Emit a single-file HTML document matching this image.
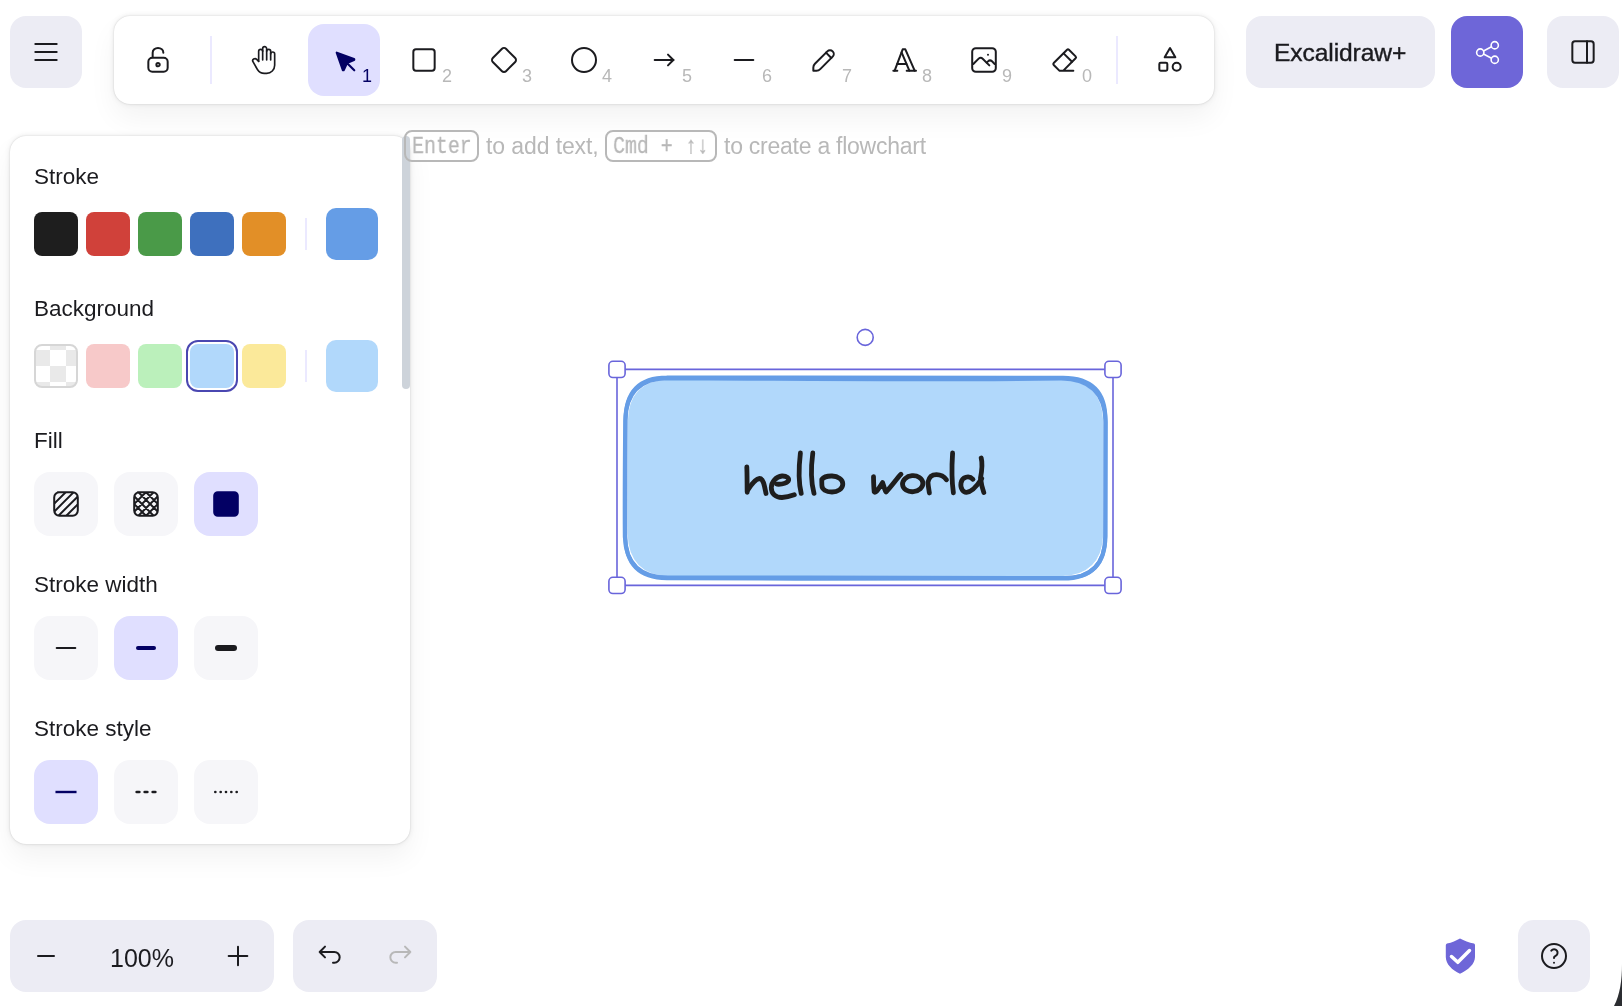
<!DOCTYPE html>
<html><head><meta charset="utf-8">
<style>
html,body{-webkit-font-smoothing:antialiased;margin:0;padding:0;width:1622px;height:1006px;overflow:hidden;background:#fff;font-family:"Liberation Sans",sans-serif;color:#1b1b1f}
.abs{position:absolute}
.kb,.h,.hint,.mono,.txt{will-change:transform}
.btn{position:absolute;background:#ececf4;border-radius:16px}
svg{position:absolute;overflow:visible}
.ic{fill:none;stroke:#1b1b1f;stroke-linecap:round;stroke-linejoin:round}
.island{position:absolute;background:#fff;border-radius:16px;box-shadow:0 0 1.86px 0 rgba(0,0,0,.17),0 0 6.25px 0 rgba(0,0,0,.08),0 14px 28px 0 rgba(0,0,0,.05)}
.kb{position:absolute;font-size:18px;color:#b8b8b8;line-height:1}
.sel{position:absolute;background:#e0dfff;border-radius:16px}
.h{position:absolute;font-size:22.5px;line-height:1;color:#1b1b1f;white-space:nowrap}
.sw{position:absolute;width:44px;height:44px;border-radius:8px}
.ob{position:absolute;width:64px;height:64px;border-radius:16px;background:#f6f6f9}
.ob.on{background:#e0dfff}
.hint{position:absolute;font-size:23px;color:#b8b8b8;white-space:nowrap;line-height:1}
.kbd{position:absolute;border:2px solid #b8b8b8;border-radius:8px;box-sizing:border-box;height:32px;top:130px}
.mono{position:absolute;-webkit-text-stroke:0.3px #b8b8b8;transform-origin:0 0;transform:scaleX(0.83);font-family:"Liberation Mono",monospace;font-size:24px;color:#b8b8b8;line-height:1;white-space:pre}
</style></head><body>


<!-- canvas -->
<svg style="left:0;top:0" width="1622" height="1006" viewBox="0 0 1622 1006">
<path d="M668 379.8 C 800 379, 950 379.8, 1062 380 Q 1102 380.5, 1103.3 422 C 1103.5 470, 1103 500, 1103.2 535 Q 1101.5 575, 1061 576.2 C 950 576.5, 800 576.4, 670 576.4 Q 629 575.5, 627.6 534 C 627.5 490, 627.3 460, 627.8 422 Q 628.3 381, 668 379.8Z" fill="#b1d8fb"/>
<g fill="none" stroke="#659de6" stroke-width="4" stroke-linecap="round" stroke-linejoin="round">
<path d="M667 377.6 C 800 377.3, 950 377.6, 1063 377.8 Q 1105.6 378, 1105.5 420 C 1105.6 470, 1105.4 500, 1105.5 536 Q 1105.2 578.5, 1063 578.6 C 950 579, 800 578.8, 667 578.2 Q 625.6 578, 625.3 536 C 625.2 490, 625.4 460, 625.6 420 Q 625.5 377.6, 667 377.6"/>
<path d="M668 378.2 C 800 378.6, 900 380.4, 1061 378.5 Q 1104.5 378.8, 1105.7 422 C 1105.2 470, 1105.6 500, 1105.2 537 Q 1104.8 577.8, 1065 578 C 950 577.4, 800 577.5, 668 577.6 Q 626.3 577.2, 624.8 537 C 624.5 500, 624.8 460, 625.2 421 Q 626 378.4, 668 378.2"/>
</g>
<g fill="none" stroke="#1e1e1e" stroke-width="4.8" stroke-linecap="round" stroke-linejoin="round">
<path d="M746.8 466.8 C 747.2 475, 747 485, 747.2 492.3"/>
<path d="M748 489.8 C 751 485, 755 478.8, 759.5 478.5 C 763.5 478.5, 764.5 486, 766 493.5"/>
<path d="M776.8 484.2 C 780 484.4, 785.5 484, 788.2 481.2 C 789.8 478.3, 786.5 475.8, 782 476 C 776 476.6, 771.5 482, 771.3 487.5 C 771.2 494, 776 497.6, 782 497.5 C 787 497.3, 790.5 496.2, 794.3 494.8"/>
<path d="M800.4 453 C 799 465, 798.4 482, 801.2 493.4"/>
<path d="M812.8 453 C 811.2 465, 810.9 482, 814 493.4"/>
<path d="M821.8 479.5 C 824 476.5, 828 475.9, 832 476 C 838 476.3, 842.8 479.5, 842.8 484 C 842.8 489, 837.5 492, 832 492 C 826 492, 822 489.5, 821.9 485.5 C 821.8 483, 821.7 481, 821.8 479.5 Z"/>
<path d="M873.5 476.6 C 873.6 482, 873.8 488, 874.2 491.8 C 875.5 493.5, 878 490, 882.6 482.6 C 884 486, 884.8 491, 886 492 C 891 487, 896.5 479, 901 474.2"/>
<ellipse cx="912.7" cy="483.7" rx="10.2" ry="8" transform="rotate(-5 912.7 483.7)"/>
<path d="M929.4 493 C 928.8 489, 928 485, 928 482 C 929 477, 932.5 474.6, 936.5 474.6 C 941 474.6, 944.5 477, 946.5 479.8"/>
<path d="M952.6 453 C 951.8 465, 951.5 480, 953.4 492.8"/>
<path d="M973 479.3 C 969 475, 962 477, 961 483 C 960 489, 963.5 492.5, 966.5 492.3 C 971 492, 977 486, 981.8 478.5"/>
<path d="M981.2 458 C 982.3 462, 982 470, 980.5 478 C 981.2 484, 982.5 489, 983.8 492.5"/>
</g>
<g fill="none" stroke="#6965db" stroke-width="1.6">
<path d="M625.1 369.4 H1104.9 M625.1 585.4 H1104.9 M617 377.5 V577.3 M1113 377.5 V577.3"/>
<rect x="608.9" y="361.3" width="16.2" height="16.2" rx="4" fill="#fff"/>
<rect x="1104.9" y="361.3" width="16.2" height="16.2" rx="4" fill="#fff"/>
<rect x="608.9" y="577.3" width="16.2" height="16.2" rx="4" fill="#fff"/>
<rect x="1104.9" y="577.3" width="16.2" height="16.2" rx="4" fill="#fff"/>
<circle cx="865.2" cy="337.4" r="8" fill="#fff"/>
</g>
</svg>

<!-- hamburger -->
<div class="btn" style="left:10px;top:16px;width:72px;height:72px"></div>
<svg style="left:30px;top:36px" width="32" height="32" viewBox="0 0 24 24"><g class="ic" stroke-width="1.5"><line x1="4" y1="6" x2="20" y2="6"/><line x1="4" y1="12" x2="20" y2="12"/><line x1="4" y1="18" x2="20" y2="18"/></g></svg>

<!-- toolbar -->
<div class="island" style="left:114px;top:16px;width:1100px;height:88px"></div>
<div class="abs" style="left:210px;top:36px;width:2px;height:48px;background:#ebe9ff"></div>
<div class="abs" style="left:1116px;top:36px;width:2px;height:48px;background:#ebe9ff"></div>
<div class="sel" style="left:308px;top:24px;width:72px;height:72px"></div>

<!-- lock -->
<svg style="left:142px;top:44px" width="32" height="32" viewBox="0 0 20 20"><g class="ic" stroke-width="1.25"><path d="M13.542 8.542H6.458a2.5 2.5 0 0 0-2.5 2.5v3.75a2.5 2.5 0 0 0 2.5 2.5h7.084a2.5 2.5 0 0 0 2.5-2.5v-3.75a2.5 2.5 0 0 0-2.5-2.5Z"/><path d="M10 13.958a1.042 1.042 0 1 0 0-2.083 1.042 1.042 0 0 0 0 2.083Z"/><path d="M6.667 8.333V5.417C6.667 3.806 8.159 2.5 10 2.5c1.841 0 3.333 1.306 3.333 2.917"/></g></svg>
<!-- hand -->
<svg style="left:248px;top:44px" width="32" height="32" viewBox="0 0 24 24"><g class="ic" stroke-width="1.25"><path d="M8 13v-7.5a1.5 1.5 0 0 1 3 0v6.5"/><path d="M11 5.5v-2a1.5 1.5 0 1 1 3 0v8.5"/><path d="M14 5.5a1.5 1.5 0 0 1 3 0v6.5"/><path d="M17 7.5a1.5 1.5 0 0 1 3 0v8.5a6 6 0 0 1 -6 6h-2h.208a6 6 0 0 1 -5.012 -2.7a69.74 69.74 0 0 1 -.196 -.3c-.312 -.479 -1.407 -2.388 -3.286 -5.728a1.5 1.5 0 0 1 .536 -2.022a1.867 1.867 0 0 1 2.28 .28l1.47 1.47"/></g></svg>
<!-- selection -->
<svg style="left:328px;top:44px" width="35" height="35" viewBox="0 0 24 24"><g style="fill:#030064;stroke:#030064;stroke-linecap:round;stroke-linejoin:round" stroke-width="1.5"><path d="M6 6l4.153 11.793a0.365 .365 0 0 0 .331 .207a0.366 .366 0 0 0 .332 -.207l2.184 -4.793l4.787 -1.994a0.355 .355 0 0 0 .213 -.323a0.355 .355 0 0 0 -.213 -.323l-11.787 -4.36z"/><path d="M13.5 13.5l4.5 4.5"/></g></svg>
<div class="kb" style="left:362px;top:67px;color:#030064">1</div>
<!-- rect -->
<svg style="left:408px;top:44px" width="32" height="32" viewBox="0 0 24 24"><g class="ic" stroke-width="1.5"><rect x="4" y="4" width="16" height="16" rx="2"/></g></svg>
<div class="kb" style="left:442px;top:67px">2</div>
<!-- diamond -->
<svg style="left:488px;top:44px" width="32" height="32" viewBox="0 0 24 24"><g class="ic" stroke-width="1.5"><path d="M10.5 20.4l-6.9 -6.9c-.781 -.781 -.781 -2.219 0 -3l6.9 -6.9c.781 -.781 2.219 -.781 3 0l6.9 6.9c.781 .781 .781 2.219 0 3l-6.9 6.9c-.781 .781 -2.219 .781 -3 0z"/></g></svg>
<div class="kb" style="left:522px;top:67px">3</div>
<!-- ellipse -->
<svg style="left:568px;top:44px" width="32" height="32" viewBox="0 0 24 24"><g class="ic" stroke-width="1.5"><circle cx="12" cy="12" r="9"/></g></svg>
<div class="kb" style="left:602px;top:67px">4</div>
<!-- arrow -->
<svg style="left:648px;top:44px" width="32" height="32" viewBox="0 0 24 24"><g class="ic" stroke-width="1.5"><line x1="5" y1="12" x2="19" y2="12"/><line x1="15" y1="16" x2="19" y2="12"/><line x1="15" y1="8" x2="19" y2="12"/></g></svg>
<div class="kb" style="left:682px;top:67px">5</div>
<!-- line -->
<svg style="left:728px;top:44px" width="32" height="32" viewBox="0 0 20 20"><g class="ic" stroke-width="1.25"><path d="M4.167 10h11.666"/></g></svg>
<div class="kb" style="left:762px;top:67px">6</div>
<!-- pencil -->
<svg style="left:808px;top:44px" width="32" height="32" viewBox="0 0 20 20"><g class="ic" stroke-width="1.25"><path d="m7.643 15.69 7.774-7.773a2.357 2.357 0 1 0-3.334-3.334L4.31 12.357a3.333 3.333 0 0 0-.977 2.357v1.953h1.953c.884 0 1.732-.352 2.357-.977Z"/><path d="m11.25 5.417 3.333 3.333"/></g></svg>
<div class="kb" style="left:842px;top:67px">7</div>
<!-- text -->
<svg style="left:888px;top:44px" width="32" height="32" viewBox="0 0 24 24"><g class="ic" stroke-width="1.5"><line x1="4" y1="20" x2="7" y2="20"/><line x1="14" y1="20" x2="21" y2="20"/><line x1="6.9" y1="15" x2="13.8" y2="15"/><line x1="10.2" y1="6.3" x2="16" y2="20"/><polyline points="5 20 11 4 13 4 20 20"/></g></svg>
<div class="kb" style="left:922px;top:67px">8</div>
<!-- image -->
<svg style="left:968px;top:44px" width="32" height="32" viewBox="0 0 20 20"><g class="ic" stroke-width="1.25"><path d="M12.5 6.667h.01"/><path d="M4.91 2.625h10.18a2.284 2.284 0 0 1 2.285 2.284v10.182a2.284 2.284 0 0 1-2.284 2.284H4.909a2.284 2.284 0 0 1-2.284-2.284V4.909a2.284 2.284 0 0 1 2.284-2.284Z"/><path d="m3.333 12.5 3.334-3.333c.773-.745 1.726-.745 2.5 0l4.166 4.166"/><path d="m11.667 11.667.833-.834c.774-.744 1.726-.744 2.5 0l1.667 1.667"/></g></svg>
<div class="kb" style="left:1002px;top:67px">9</div>
<!-- eraser -->
<svg style="left:1048px;top:44px" width="32" height="32" viewBox="0 0 24 24"><g class="ic" stroke-width="1.5"><path d="M19 20h-10.5l-4.21 -4.3a1 1 0 0 1 0 -1.41l10 -10a1 1 0 0 1 1.41 0l5 5a1 1 0 0 1 0 1.41l-9.2 9.3"/><path d="M18 13.3l-6.3 -6.3"/></g></svg>
<div class="kb" style="left:1082px;top:67px">0</div>
<!-- extra tools -->
<svg style="left:1154px;top:44px" width="32" height="32" viewBox="0 0 24 24"><g class="ic" stroke-width="1.5"><path d="M12 3l-4 7h8z"/><path d="M17 17m-3 0a3 3 0 1 0 6 0a3 3 0 1 0 -6 0"/><path d="M4 14m0 1a1 1 0 0 1 1 -1h4a1 1 0 0 1 1 1v4a1 1 0 0 1 -1 1h-4a1 1 0 0 1 -1 -1z"/></g></svg>

<!-- right top -->
<div class="btn" style="left:1246px;top:16px;width:189px;height:72px"></div>
<div class="abs txt" style="left:1274.2px;top:38px;font-size:24.6px;line-height:30px;color:#1b1b1f;white-space:nowrap;-webkit-text-stroke:0.4px #1b1b1f;letter-spacing:-0.1px">Excalidraw+</div>
<div class="btn" style="left:1451px;top:16px;width:72px;height:72px;background:#6e66d8"></div>
<svg style="left:1472.5px;top:37.5px" width="29" height="29" viewBox="0 0 24 24"><g fill="none" stroke="#fff" stroke-width="1.3" stroke-linecap="round" stroke-linejoin="round"><path d="M6 12m-3 0a3 3 0 1 0 6 0a3 3 0 1 0 -6 0"/><path d="M18 6m-3 0a3 3 0 1 0 6 0a3 3 0 1 0 -6 0"/><path d="M18 18m-3 0a3 3 0 1 0 6 0a3 3 0 1 0 -6 0"/><path d="M8.7 10.7l6.6 -3.4"/><path d="M8.7 13.3l6.6 3.4"/></g></svg>
<div class="btn" style="left:1547px;top:16px;width:72px;height:72px"></div>
<svg style="left:1567px;top:36px" width="32" height="32" viewBox="0 0 24 24"><g class="ic" stroke-width="1.5"><path d="M4 4m0 2a2 2 0 0 1 2 -2h12a2 2 0 0 1 2 2v12a2 2 0 0 1 -2 2h-12a2 2 0 0 1 -2 -2z"/><path d="M15 4l0 16"/></g></svg>

<!-- left panel -->
<div class="island" style="left:10px;top:136px;width:400px;height:708px"></div>
<div class="abs" style="left:402px;top:136px;width:8px;height:253px;background:#cdd3da;border-radius:4px"></div>

<div class="h" style="left:34px;top:166px">Stroke</div>
<div class="sw" style="left:34px;top:212px;background:#1e1e1e"></div>
<div class="sw" style="left:86px;top:212px;background:#d0413a"></div>
<div class="sw" style="left:138px;top:212px;background:#4a9a48"></div>
<div class="sw" style="left:190px;top:212px;background:#3e70be"></div>
<div class="sw" style="left:242px;top:212px;background:#e28f27"></div>
<div class="abs" style="left:305px;top:218px;width:2px;height:32px;background:#ebe9ff"></div>
<div class="abs" style="left:326px;top:208px;width:52px;height:52px;border-radius:10px;background:#659de6"></div>

<div class="h" style="left:34px;top:298px">Background</div>
<div class="sw" style="left:34px;top:344px;box-sizing:border-box;border:2px solid #d6d6d6;background-color:#fff;background-image:conic-gradient(#e9e9e9 25%,#fff 0 50%,#e9e9e9 0 75%,#fff 0);background-size:32px 32px;background-position:-2px -12px"></div>
<div class="sw" style="left:86px;top:344px;background:#f7c9c9"></div>
<div class="sw" style="left:138px;top:344px;background:#bbf0bb"></div>
<div class="abs" style="left:186px;top:340px;width:52px;height:52px;box-sizing:border-box;border:2px solid #4a47b1;border-radius:12px"></div>
<div class="sw" style="left:190px;top:344px;background:#b1d8fb"></div>
<div class="sw" style="left:242px;top:344px;background:#fbe99a"></div>
<div class="abs" style="left:305px;top:350px;width:2px;height:32px;background:#ebe9ff"></div>
<div class="abs" style="left:326px;top:340px;width:52px;height:52px;border-radius:10px;background:#b1d8fb"></div>

<div class="h" style="left:34px;top:430px">Fill</div>
<div class="ob" style="left:34px;top:472px"></div>
<div class="ob" style="left:114px;top:472px"></div>
<div class="ob on" style="left:194px;top:472px"></div>

<svg style="left:50px;top:488px" width="32" height="32" viewBox="0 0 20 20"><defs><clipPath id="rr1"><path d="M5.879 2.625h8.242a3.254 3.254 0 0 1 3.254 3.254v8.242a3.254 3.254 0 0 1-3.254 3.254H5.88a3.254 3.254 0 0 1-3.254-3.254V5.88a3.254 3.254 0 0 1 3.254-3.254Z"/></clipPath></defs><path d="M5.879 2.625h8.242a3.254 3.254 0 0 1 3.254 3.254v8.242a3.254 3.254 0 0 1-3.254 3.254H5.88a3.254 3.254 0 0 1-3.254-3.254V5.88a3.254 3.254 0 0 1 3.254-3.254Z" fill="none" stroke="#1b1b1f" stroke-width="1.25"/><g clip-path="url(#rr1)"><path d="M2.258 15.156 15.156 2.258M7.324 20.222 20.222 7.325m-20.444 5.35L12.675-.222m-8.157 18.34L17.416 5.22" fill="none" stroke="#1b1b1f" stroke-width="1.25" stroke-linecap="round"/></g></svg>
<svg style="left:130px;top:488px" width="32" height="32" viewBox="0 0 20 20"><defs><clipPath id="rr2"><path d="M5.879 2.625h8.242a3.254 3.254 0 0 1 3.254 3.254v8.242a3.254 3.254 0 0 1-3.254 3.254H5.88a3.254 3.254 0 0 1-3.254-3.254V5.88a3.254 3.254 0 0 1 3.254-3.254Z"/></clipPath></defs><path d="M5.879 2.625h8.242a3.254 3.254 0 0 1 3.254 3.254v8.242a3.254 3.254 0 0 1-3.254 3.254H5.88a3.254 3.254 0 0 1-3.254-3.254V5.88a3.254 3.254 0 0 1 3.254-3.254Z" fill="none" stroke="#1b1b1f" stroke-width="1.25"/><g clip-path="url(#rr2)"><path d="M2.426 15.044 15.044 2.426M7.383 20 20 7.383M0 12.617 12.617 0m-7.98 17.941L17.256 5.324m-2.211 12.25L2.426 4.956M20 12.617 7.383 0m5.234 20L0 7.383m17.941 7.98L5.324 2.745" fill="none" stroke="#1b1b1f" stroke-width="1.25" stroke-linecap="round"/></g></svg>
<svg style="left:210px;top:488px" width="32" height="32" viewBox="0 0 20 20"><path d="M4.91 2.625h10.18a2.284 2.284 0 0 1 2.285 2.284v10.182a2.284 2.284 0 0 1-2.284 2.284H4.909a2.284 2.284 0 0 1-2.284-2.284V4.909a2.284 2.284 0 0 1 2.284-2.284Z" fill="#030064" stroke="#030064" stroke-width="1.25"/></svg>

<div class="h" style="left:34px;top:574px">Stroke width</div>
<div class="ob" style="left:34px;top:616px"></div>
<div class="ob on" style="left:114px;top:616px"></div>
<div class="ob" style="left:194px;top:616px"></div>
<svg style="left:50px;top:632px" width="32" height="32" viewBox="0 0 20 20"><path d="M4.167 10h11.666" stroke="#1b1b1f" stroke-width="1.25" stroke-linecap="round"/></svg>
<svg style="left:130px;top:632px" width="32" height="32" viewBox="0 0 20 20"><path d="M5 10h10" stroke="#030064" stroke-width="2.5" stroke-linecap="round"/></svg>
<svg style="left:210px;top:632px" width="32" height="32" viewBox="0 0 20 20"><path d="M5 10h10" stroke="#1b1b1f" stroke-width="3.75" stroke-linecap="round"/></svg>

<div class="h" style="left:34px;top:718px">Stroke style</div>
<div class="ob on" style="left:34px;top:760px"></div>
<div class="ob" style="left:114px;top:760px"></div>
<div class="ob" style="left:194px;top:760px"></div>

<svg style="left:50px;top:776px" width="32" height="32" viewBox="0 0 20 20"><path d="M4.167 10h11.666" stroke="#030064" stroke-width="1.5" fill="none" stroke-linecap="square"/></svg>
<svg style="left:130px;top:776px" width="32" height="32" viewBox="0 0 24 24"><g fill="none" stroke="#1b1b1f" stroke-width="2" stroke-linecap="round"><path d="M5 12h2"/><path d="M17 12h2"/><path d="M11 12h2"/></g></svg>
<svg style="left:210px;top:776px" width="32" height="32" viewBox="0 0 24 24"><g fill="none" stroke="#1b1b1f" stroke-width="2" stroke-linecap="round"><path d="M4 12v.01"/><path d="M8 12v.01"/><path d="M12 12v.01"/><path d="M16 12v.01"/><path d="M20 12v.01"/></g></svg>

<!-- hint -->
<div class="kbd" style="left:404px;width:75px"></div>
<div class="mono" style="left:412px;top:135px">Enter</div>
<div class="hint" style="left:486px;top:135px;letter-spacing:-0.1px">to add text,</div>
<div class="kbd" style="left:605px;width:112px"></div>
<div class="mono" style="left:613px;top:135px">Cmd + ↑↓</div>
<div class="hint" style="left:724px;top:135px;letter-spacing:-0.25px">to create a flowchart</div>

<!-- bottom -->
<div class="btn" style="left:10px;top:920px;width:264px;height:72px"></div>
<div class="abs txt" style="left:110px;top:944px;font-size:25px;line-height:28px;white-space:nowrap">100%</div>
<div class="btn" style="left:293px;top:920px;width:144px;height:72px"></div>
<div class="btn" style="left:1518px;top:920px;width:72px;height:72px"></div>

<svg style="left:30px;top:940px" width="32" height="32" viewBox="0 0 20 20"><path d="M5 10h10" fill="none" stroke="#1b1b1f" stroke-width="1.25" stroke-linecap="round"/></svg>
<svg style="left:222px;top:940px" width="32" height="32" viewBox="0 0 20 20"><path d="M10 4.167v11.666M4.167 10h11.666" fill="none" stroke="#1b1b1f" stroke-width="1.25" stroke-linecap="round"/></svg>
<svg style="left:313px;top:940px" width="32" height="32" viewBox="0 0 20 20"><path d="M7.5 10.833 4.167 7.5 7.5 4.167M4.167 7.5h9.166a3.333 3.333 0 0 1 0 6.667H12.5" fill="none" stroke="#1b1b1f" stroke-width="1.25" stroke-linecap="round" stroke-linejoin="round"/></svg>
<svg style="left:385px;top:940px" width="32" height="32" viewBox="0 0 20 20"><path d="M12.5 10.833 15.833 7.5 12.5 4.167M15.833 7.5H6.667a3.333 3.333 0 1 0 0 6.667H7.5" fill="none" stroke="#b8b8b8" stroke-width="1.25" stroke-linecap="round" stroke-linejoin="round"/></svg>
<svg style="left:1538px;top:940px" width="32" height="32" viewBox="0 0 24 24"><g fill="none" stroke="#1b1b1f" stroke-width="1.5" stroke-linecap="round" stroke-linejoin="round"><circle cx="12" cy="12" r="9"/><line x1="12" y1="17" x2="12" y2="17.01"/><path d="M12 13.5a1.5 1.5 0 0 1 1 -1.5a2.6 2.6 0 1 0 -3 -4"/></g></svg>
<svg style="left:1440px;top:936px" width="40" height="40" viewBox="0 0 40 40"><path d="M20 2.6 C24 4.8 29 6.8 34 7.6 C35 8 35 9 35 10 V21 C35 28 28 34 20 37.7 C12 34 5.8 28 5.8 21 V10 C5.8 9 6 8 7 7.6 C12 6.8 16 4.8 20 2.6Z" fill="#6e66d8"/><path d="M11.5 20.5 L17.8 26.3 L29.5 14.6" fill="none" stroke="#fff" stroke-width="3.5" stroke-linecap="round" stroke-linejoin="round"/></svg>
<svg style="left:1560px;top:940px" width="62" height="66" viewBox="0 0 62 66"><path d="M62 24 C62 40 60 55 54 66 L62 66Z" fill="#2b2d31"/></svg>

</body></html>
